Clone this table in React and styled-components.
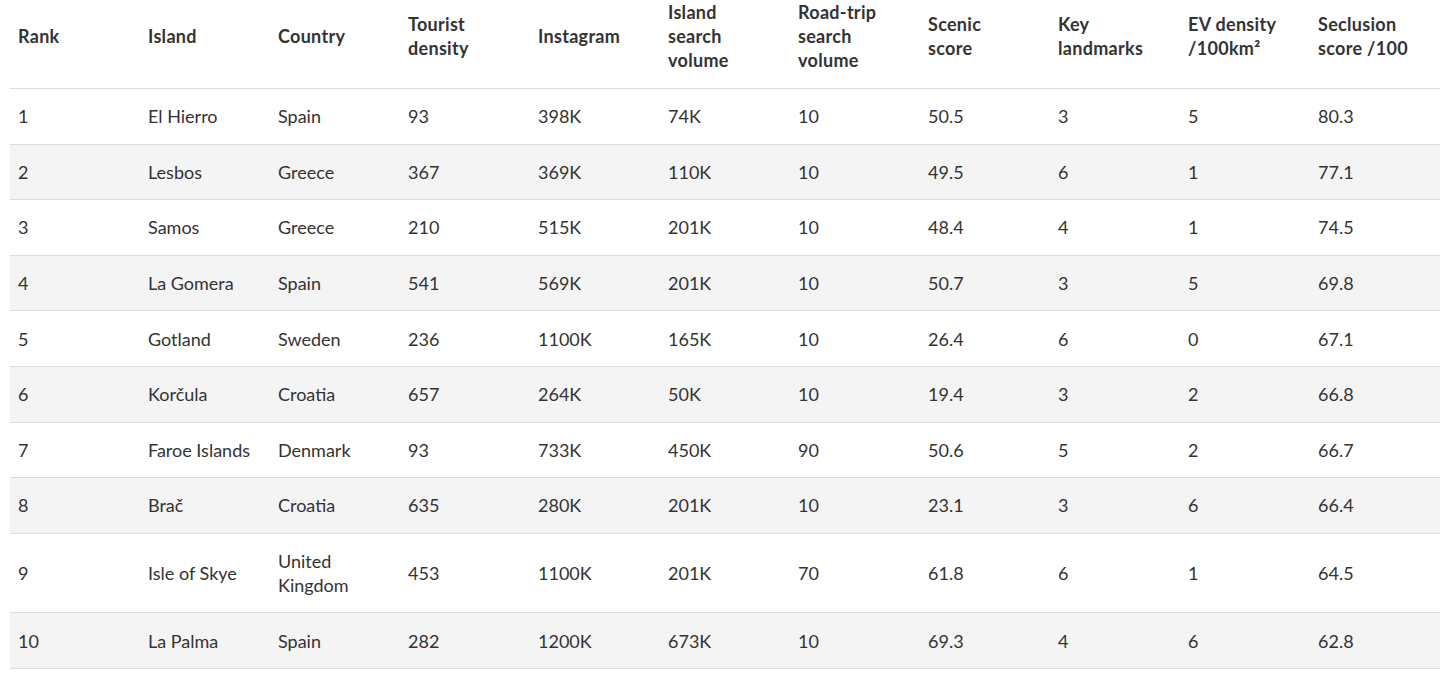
import React from "react";
import styled, { createGlobalStyle } from "styled-components";

const GlobalStyle = createGlobalStyle`
  *, *::before, *::after { box-sizing: border-box; }
  body {
    margin: 0;
    background: #fff;
    font-family: Lato, "Noto Sans", sans-serif;
    color: #333;
  }
`;

const Wrapper = styled.div`
  padding: 0 4px 0 10px;
`;

const Table = styled.table`
  width: 1430px;
  table-layout: fixed;
  border-collapse: collapse;
  font-size: 18px;
  line-height: 24px;
`;

const HeadCell = styled.th`
  width: 130px;
  text-align: left;
  vertical-align: middle;
  font-weight: 700;
  letter-spacing: 0.3px;
  color: #333;
  padding: 0 10px 16px 8px;
  border-bottom: 1px solid #dcdcdc;
  height: 87px;
`;

const Row = styled.tr`
  background: ${(p) => (p.$shaded ? "#f4f4f4" : "#fff")};
  border-bottom: 1px solid #dcdcdc;
`;

const Cell = styled.td`
  padding: 15.3px 10px 15.3px 8px;
  vertical-align: middle;
  color: #333;
`;

const columns = [
  ["Rank"],
  ["Island"],
  ["Country"],
  ["Tourist", "density"],
  ["Instagram"],
  ["Island", "search", "volume"],
  ["Road-trip", "search", "volume"],
  ["Scenic", "score"],
  ["Key", "landmarks"],
  ["EV density", "/100km²"],
  ["Seclusion", "score /100"],
];

const rows = [
  [1, "El Hierro", "Spain", 93, "398K", "74K", 10, "50.5", 3, 5, "80.3"],
  [2, "Lesbos", "Greece", 367, "369K", "110K", 10, "49.5", 6, 1, "77.1"],
  [3, "Samos", "Greece", 210, "515K", "201K", 10, "48.4", 4, 1, "74.5"],
  [4, "La Gomera", "Spain", 541, "569K", "201K", 10, "50.7", 3, 5, "69.8"],
  [5, "Gotland", "Sweden", 236, "1100K", "165K", 10, "26.4", 6, 0, "67.1"],
  [6, "Korčula", "Croatia", 657, "264K", "50K", 10, "19.4", 3, 2, "66.8"],
  [7, "Faroe Islands", "Denmark", 93, "733K", "450K", 90, "50.6", 5, 2, "66.7"],
  [8, "Brač", "Croatia", 635, "280K", "201K", 10, "23.1", 3, 6, "66.4"],
  [9, "Isle of Skye", ["United", "Kingdom"], 453, "1100K", "201K", 70, "61.8", 6, 1, "64.5"],
  [10, "La Palma", "Spain", 282, "1200K", "673K", 10, "69.3", 4, 6, "62.8"],
];

const Lines = ({ value }) =>
  Array.isArray(value)
    ? value.map((line, j) => (
        <React.Fragment key={j}>
          {j > 0 && <br />}
          {line}
        </React.Fragment>
      ))
    : value;

const App = () => {
  return (
    <Wrapper>
      <GlobalStyle />
      <Table>
        <thead>
          <tr>
            {columns.map((lines, i) => (
              <HeadCell key={i}>
                <Lines value={lines} />
              </HeadCell>
            ))}
          </tr>
        </thead>
        <tbody>
          {rows.map((row, i) => (
            <Row key={row[0]} $shaded={i % 2 === 1}>
              {row.map((value, j) => (
                <Cell key={j}>
                  <Lines value={value} />
                </Cell>
              ))}
            </Row>
          ))}
        </tbody>
      </Table>
    </Wrapper>
  );
};

export default App;
